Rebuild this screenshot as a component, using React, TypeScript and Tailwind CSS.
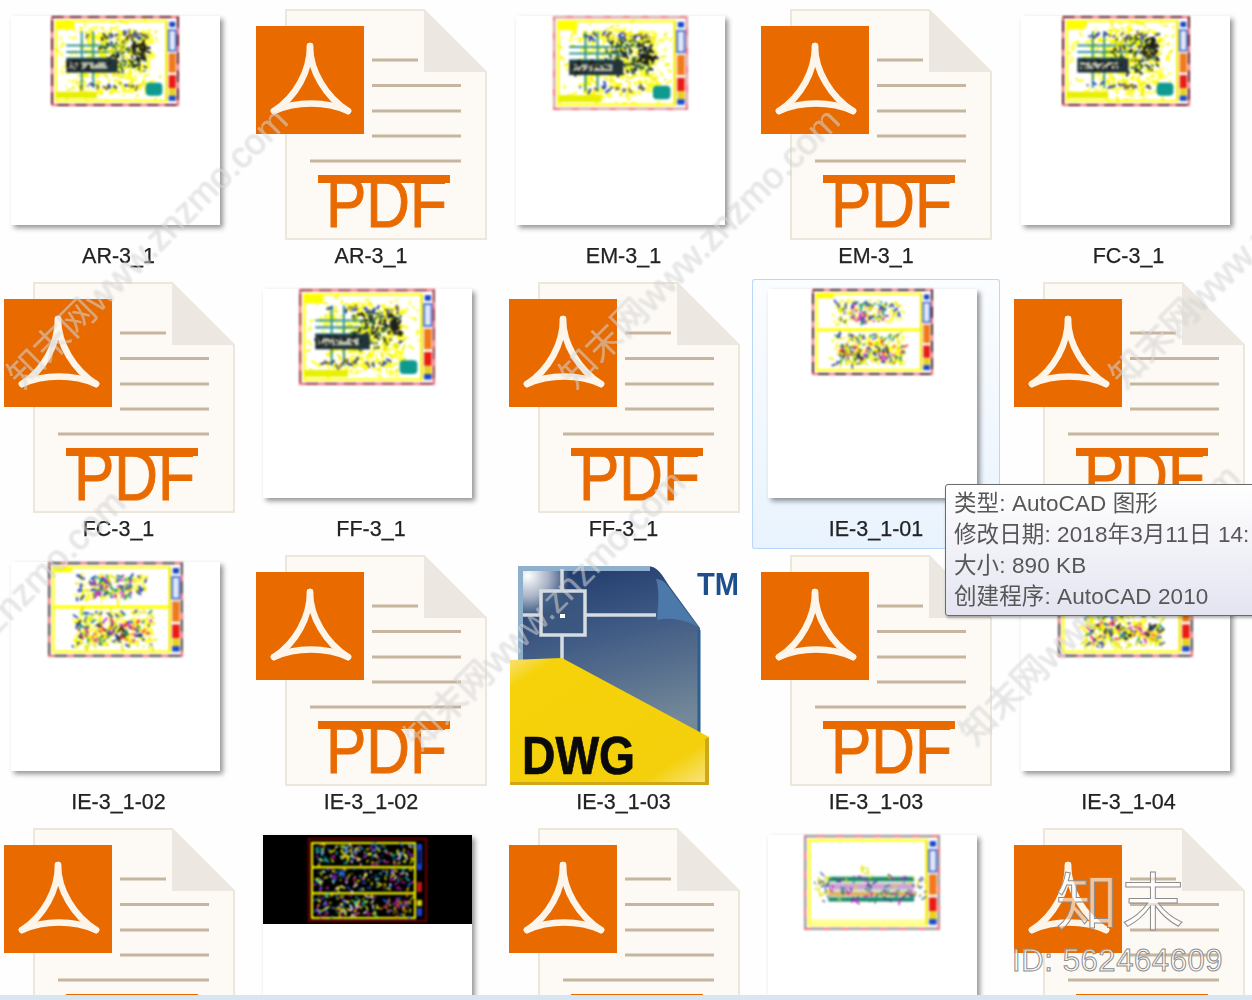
import React from "react";

const SANS = "font-['Liberation_Sans','Noto_Sans_CJK_SC',sans-serif]";

function rng(seed: number) {
  let a = seed;
  return () => {
    a |= 0;
    a = (a + 0x6d2b79f5) | 0;
    let t = Math.imul(a ^ (a >>> 15), 1 | a);
    t = (t + Math.imul(t ^ (t >>> 7), 61 | t)) ^ t;
    return ((t ^ (t >>> 14)) >>> 0) / 4294967296;
  };
}

type Region = [number, number, number, number, number, string[], number?];

function Noise({ regions, seed }: { regions: Region[]; seed: number }) {
  const r = rng(seed);
  const items: React.ReactNode[] = [];
  regions.forEach((g, i) => {
    const [x, y, w, h, n, colors, sw] = g;
    for (let k = 0; k < n; k++) {
      const px = x + r() * w;
      const py = y + r() * h;
      const a = r() * Math.PI * 2;
      const l = 1 + r() * 4;
      items.push(
        <line
          key={`${i}-${k}`}
          x1={px}
          y1={py}
          x2={px + Math.cos(a) * l}
          y2={py + Math.sin(a) * l}
          stroke={colors[Math.floor(r() * colors.length)]}
          strokeWidth={sw ?? 1}
        />
      );
    }
  });
  return <g>{items}</g>;
}

function TitleStrip() {
  return (
    <g>
      <rect x="91" y="3" width="7.5" height="64" fill="#ffffff" />
      <rect x="92.5" y="4.5" width="4.5" height="4" fill="#1545c4" />
      <rect x="92" y="11" width="5.5" height="16" fill="#dfe6f5" stroke="#2f5fd0" strokeWidth="1.2" />
      <rect x="92" y="29" width="5.5" height="15" fill="#f07a1a" />
      <rect x="92" y="46" width="5.5" height="10" fill="#ea1a14" />
      <rect x="92" y="56" width="5.5" height="6" fill="#e8d020" />
      <rect x="92" y="62" width="5.5" height="4" fill="#1a4ac8" />
      <line x1="90.4" y1="4" x2="90.4" y2="66" stroke="#e6d400" strokeWidth="1" />
    </g>
  );
}

function Cad({
  width,
  height,
  kind,
  seed,
  dash = "#6a1c2c",
}: {
  width: number;
  height: number;
  kind: "plan" | "double" | "elev";
  seed: number;
  dash?: string;
}) {
  const yel = ["#ffff00", "#ffff00", "#f4f000"];
  let body: React.ReactNode = null;
  if (kind === "plan") {
    body = (
      <g>
        <Noise
          seed={seed}
          regions={[
            [6, 5, 82, 60, 130, yel, 1.3],
            [22, 10, 56, 50, 280, yel, 1.5],
          ]}
        />
        <g stroke="#1f8a8a" strokeWidth="1.5" opacity="0.9">
          <line x1="12" y1="23" x2="55" y2="23" />
          <line x1="12" y1="28" x2="55" y2="28" />
          <line x1="12" y1="33" x2="45" y2="33" />
          <line x1="24" y1="12" x2="24" y2="56" />
          <line x1="33" y1="12" x2="33" y2="56" />
        </g>
        <Noise
          seed={seed + 3}
          regions={[
            [40, 17, 34, 26, 150, ["#1c2d20", "#2a6040", "#e2e200", "#e2e200", "#101010", "#2a6040"], 1.4],
            [64, 20, 10, 14, 26, ["#151515", "#202020"], 1.8],
            [20, 14, 56, 1.5, 20, ["#1d38b0", "#7a6a30"], 1.5],
            [18, 53, 52, 1.5, 18, ["#1d38b0", "#7a6a30"], 1.5],
          ]}
        />
        <rect x="12" y="33" width="40" height="11" fill="#22343a" />
        <rect x="14" y="36" width="30" height="5" fill="#b8bfae" />
        <Noise seed={seed + 1} regions={[[14, 36, 30, 5, 26, ["#151515"], 1.1]]} />
        <rect x="74" y="52" width="13" height="10" rx="3" fill="#0f9a90" />
        <rect x="4" y="4.5" width="14" height="6" fill="#ffff00" />
        <rect x="4" y="59" width="32" height="5" fill="#e8f000" />
      </g>
    );
  } else if (kind === "double") {
    body = (
      <g>
        <rect x="4" y="32" width="86" height="2.4" fill="#ffff00" />
        <rect x="4" y="4.5" width="14" height="3" fill="#ffff00" />
        <Noise
          seed={seed}
          regions={[
            [18, 10, 56, 18, 70, yel, 1.2],
            [18, 38, 60, 24, 120, yel, 1.3],
            [32, 11, 30, 15, 90, ["#0f8a70", "#1d38b0", "#e2e200", "#0f8a70", "#d018c8"], 1.4],
            [20, 10, 8, 16, 12, ["#1d38b0", "#1d38b0", "#e2e200"], 1.4],
            [64, 10, 10, 16, 12, ["#1d38b0", "#e2e200"], 1.4],
            [22, 44, 54, 13, 170, ["#e2e200", "#ffff00", "#d018c8", "#1d38b0", "#0f8a70", "#ff3030", "#ffff00", "#202020"], 1.4],
            [18, 37, 60, 3, 36, ["#1d38b0", "#0f8a70", "#e2e200"], 1.2],
            [18, 58, 60, 4, 36, ["#e2e200", "#1d38b0", "#e2e200"], 1.2],
          ]}
        />
      </g>
    );
  } else {
    body = (
      <g>
        <rect x="18" y="30" width="63" height="19" fill="#d0e8d0" />
        <rect x="18" y="31" width="63" height="3" fill="#1f8a70" />
        <rect x="18" y="36" width="63" height="4" fill="#d1a0d8" />
        <rect x="18" y="42" width="63" height="3" fill="#e0b060" />
        <rect x="18" y="46" width="63" height="3" fill="#1f8a70" />
        <Noise
          seed={seed}
          regions={[
            [18, 30, 63, 19, 70, ["#e2e200", "#d018c8", "#1d8a70", "#404090"], 1.1],
            [7, 30, 11, 20, 22, ["#e2e200", "#4050a0"], 1],
            [81, 30, 8, 20, 16, ["#e2e200", "#4050a0"], 1],
            [40, 22, 8, 8, 6, ["#e2e200"], 1],
          ]}
        />
        <rect x="5" y="62" width="84" height="4" fill="#ffffa0" />
      </g>
    );
  }
  return (
    <svg
      width={width}
      height={height}
      viewBox="0 0 100 70"
      preserveAspectRatio="none"
      className="block blur-[0.9px]"
    >
      <rect x="0" y="0" width="100" height="70" fill="#ffffff" />
      <rect x="4" y="4" width="86" height="62" fill="none" stroke="#ffff00" strokeWidth="1.6" />
      {body}
      <TitleStrip />
      <rect x="0.8" y="0.8" width="98.4" height="68.4" fill="none" stroke="#f0707a" strokeWidth="1.7" />
      <rect
        x="0.8"
        y="0.8"
        width="98.4"
        height="68.4"
        fill="none"
        stroke={dash}
        strokeWidth="1.7"
        strokeDasharray="9 5"
      />
    </svg>
  );
}

function BlackCad() {
  const cols = ["#ffff00", "#ffff00", "#e018d0", "#20d0d0", "#ffffff", "#2060ff"];
  return (
    <svg width={119} height={84} viewBox="0 0 119 84" className="block blur-[0.8px]">
      <rect x="0.7" y="0.7" width="117.6" height="82.6" fill="none" stroke="#8a0000" strokeWidth="1.8" />
      <rect x="4" y="5" width="103" height="75" fill="none" stroke="#ffff00" strokeWidth="2" />
      <rect x="4" y="28" width="103" height="2.5" fill="#e8e800" />
      <rect x="4" y="54" width="103" height="2.5" fill="#e8e800" />
      <Noise
        seed={77}
        regions={[
          [7, 7, 22, 19, 40, cols, 1.4],
          [32, 7, 22, 19, 40, cols, 1.4],
          [57, 7, 22, 19, 40, cols, 1.4],
          [82, 7, 22, 19, 40, cols, 1.4],
          [7, 32, 96, 20, 130, cols, 1.4],
          [7, 58, 30, 20, 55, cols, 1.4],
          [40, 58, 30, 20, 60, ["#ffffff", "#ffff00", "#20d0d0", "#e018d0"], 1.4],
          [74, 58, 30, 20, 55, ["#ffff00", "#ff8020", "#2060ff", "#e018d0"], 1.4],
        ]}
      />
      <rect x="109" y="6" width="5" height="26" fill="#1a3fd0" />
      <rect x="110.5" y="12" width="2" height="14" fill="#000000" />
      <rect x="109" y="44" width="5" height="10" fill="#c01818" />
      <rect x="109" y="62" width="5" height="6" fill="#e0d020" />
      <rect x="109" y="70" width="5" height="8" fill="#1a3fd0" />
    </svg>
  );
}

function Thumb({ children, black }: { children: React.ReactNode; black?: boolean }) {
  return (
    <div className="ml-[16px] mt-[10px] h-[209px] w-[209px] bg-white shadow-[3px_3px_5px_rgba(0,0,0,0.42)]">
      <div className={black ? "flex h-[89px] justify-center bg-black pt-[3px]" : ""}>{children}</div>
    </div>
  );
}

function PdfIcon() {
  return (
    <svg width={232} height={232} viewBox="0 0 232 232" className="ml-[9px] mt-[3px] block">
      <path d="M30 1H168L230 63V230H30Z" fill="#fdfaf5" stroke="#ece6db" strokeWidth="2" />
      <path d="M168 1L230 63H168Z" fill="#ece8e1" />
      <g stroke="#c6b6a0" strokeWidth="3">
        <line x1="116" y1="51" x2="162" y2="51" />
        <line x1="116" y1="76.5" x2="205" y2="76.5" />
        <line x1="116" y1="102" x2="205" y2="102" />
        <line x1="116" y1="127" x2="205" y2="127" />
        <line x1="54" y1="152" x2="205" y2="152" />
      </g>
      <rect x="0" y="17" width="108" height="108" fill="#e96b00" />
      <g fill="none" stroke="#fdf5ea" strokeWidth="6.5" strokeLinecap="round">
        <path d="M54 37C54 62 40 88 18 102" />
        <path d="M54 37C54 62 70 88 92 102" />
        <path d="M18 102C40 92 70 92 92 102" />
      </g>
      <rect x="62" y="166" width="132" height="8" fill="#e96b00" />
      <text
        x="70"
        y="218"
        fontSize="70"
        fill="#e96b00"
        stroke="#e96b00"
        strokeWidth="1"
        textLength={121}
        lengthAdjust="spacingAndGlyphs"
        fontFamily="'Liberation Sans', sans-serif"
      >
        PDF
      </text>
    </svg>
  );
}

function DwgIcon() {
  return (
    <svg width={234} height={232} viewBox="0 0 234 232" className="ml-[10.5px] mt-[5px] block">
      <defs>
        <linearGradient id="dwgBlue" x1="0" y1="0" x2="0.25" y2="1">
          <stop offset="0" stopColor="#1c3669" />
          <stop offset="0.45" stopColor="#3f5a84" />
          <stop offset="1" stopColor="#738899" />
        </linearGradient>
        <radialGradient id="dwgGlow" cx="0.08" cy="0.08" r="0.7">
          <stop offset="0" stopColor="#ffffff" />
          <stop offset="0.5" stopColor="#ffffff" stopOpacity="0.6" />
          <stop offset="1" stopColor="#ffffff" stopOpacity="0" />
        </radialGradient>
        <linearGradient id="dwgYellow" x1="0" y1="0" x2="1" y2="1">
          <stop offset="0" stopColor="#f8e27a" />
          <stop offset="0.12" stopColor="#f6d20a" />
          <stop offset="0.82" stopColor="#f4d00c" />
          <stop offset="1" stopColor="#f8e68a" />
        </linearGradient>
      </defs>
      <path d="M8 9H137C148 9 152 18 160 30L190 71V190H8Z" fill="url(#dwgBlue)" />
      <path d="M8 11.5H140" stroke="#8fb0cc" strokeWidth="5" />
      <path d="M10.5 9V110" stroke="#8fb0cc" strokeWidth="5" />
      <path d="M189 73V182" stroke="#2c5f90" strokeWidth="3" />
      <rect x="13" y="14" width="60" height="60" fill="url(#dwgGlow)" />
      <path d="M146 22C150 34 148 50 147 63C160 60 176 63 188 70L160 32C156 26 152 22 146 22Z" fill="#4a79aa" />
      <g stroke="#d6dde2" strokeWidth="3.5" fill="none">
        <line x1="52" y1="12" x2="52" y2="34" />
        <line x1="52" y1="78" x2="52" y2="102" />
        <line x1="13" y1="58" x2="31" y2="58" />
        <line x1="75" y1="58" x2="146" y2="58" />
        <rect x="31" y="34" width="44" height="44" fill="#3c5880" fillOpacity="0.85" />
      </g>
      <rect x="50" y="57" width="5" height="4" fill="#ffffff" />
      <path d="M0 103L52 101L199 180V228H0Z" fill="url(#dwgYellow)" />
      <path d="M0 225H199V228H0Z" fill="#cfa818" />
      <path d="M195 182L199 180V228L195 225Z" fill="#cfa818" />
      <text
        x="12"
        y="217"
        fontSize="54"
        fontWeight="700"
        fill="#0a0a0a"
        stroke="#0a0a0a"
        strokeWidth="0.7"
        textLength={113}
        lengthAdjust="spacingAndGlyphs"
        fontFamily="'Liberation Sans', sans-serif"
      >
        DWG
      </text>
      <text
        x="187"
        y="38"
        fontSize="31"
        fontWeight="700"
        fill="#1c4f8c"
        textLength={42}
        lengthAdjust="spacingAndGlyphs"
        fontFamily="'Liberation Sans', sans-serif"
      >
        TM
      </text>
    </svg>
  );
}

function Cell({
  label,
  selected,
  children,
}: {
  label: string;
  selected?: boolean;
  children: React.ReactNode;
}) {
  return (
    <div
      className={`flex h-[270px] w-[248px] flex-col rounded-[3px] ${
        selected ? "bg-gradient-to-b from-[#fbfdff] to-[#e9f3fd] shadow-[inset_0_0_0_1px_#b9d7fa]" : ""
      }`}
    >
      <div className="h-[236px]">{children}</div>
      <div
        className={`flex h-[28px] items-center justify-center text-[21.5px] text-[#222222] [-webkit-text-stroke:0.25px_#222222] ${SANS}`}
      >
        {label}
      </div>
    </div>
  );
}

function Mark({ x, y, text }: { x: number; y: number; text: string }) {
  return (
    <div
      className={`absolute -translate-x-1/2 -translate-y-1/2 -rotate-45 whitespace-nowrap text-[36px] leading-none text-white/40 [text-shadow:0_0_2px_rgba(120,120,120,0.32)] ${SANS}`}
      style={{ left: x, top: y }}
    >
      {text}
    </div>
  );
}

const WM = "知末网www.znzmo.com";

export default function App() {
  return (
    <div className="relative flex h-[1000px] w-[1252px] flex-col overflow-hidden bg-[#fefefe]">
      <div className="min-h-0 flex-1 overflow-hidden blur-[0.4px]">
        <div className="-ml-[5.5px] grid grid-cols-[repeat(5,248px)] auto-rows-[270px] gap-x-[4.5px] gap-y-[3px] pt-[6px]">
          <Cell label="AR-3_1"><Thumb><div className="ml-[40px]"><Cad width={128} height={90} kind="plan" seed={11} /></div></Thumb></Cell>
          <Cell label="AR-3_1"><PdfIcon /></Cell>
          <Cell label="EM-3_1"><Thumb><div className="ml-[37px]"><Cad width={135} height={94} kind="plan" seed={23} dash="#d9a9a9" /></div></Thumb></Cell>
          <Cell label="EM-3_1"><PdfIcon /></Cell>
          <Cell label="FC-3_1"><Thumb><div className="ml-[41px]"><Cad width={128} height={90} kind="plan" seed={37} /></div></Thumb></Cell>

          <Cell label="FC-3_1"><PdfIcon /></Cell>
          <Cell label="FF-3_1"><Thumb><div className="ml-[36px]"><Cad width={136} height={96} kind="plan" seed={41} dash="#a04650" /></div></Thumb></Cell>
          <Cell label="FF-3_1"><PdfIcon /></Cell>
          <Cell label="IE-3_1-01" selected><Thumb><div className="ml-[44px]"><Cad width={121} height={86} kind="double" seed={53} dash="#4a2028" /></div></Thumb></Cell>
          <Cell label=""><PdfIcon /></Cell>

          <Cell label="IE-3_1-02"><Thumb><div className="ml-[37px]"><Cad width={135} height={95} kind="double" seed={61} dash="#555555" /></div></Thumb></Cell>
          <Cell label="IE-3_1-02"><PdfIcon /></Cell>
          <Cell label="IE-3_1-03"><DwgIcon /></Cell>
          <Cell label="IE-3_1-03"><PdfIcon /></Cell>
          <Cell label="IE-3_1-04"><Thumb><div className="ml-[37px]"><Cad width={135} height={95} kind="double" seed={67} dash="#555555" /></div></Thumb></Cell>

          <Cell label=""><PdfIcon /></Cell>
          <Cell label=""><Thumb black><BlackCad /></Thumb></Cell>
          <Cell label=""><PdfIcon /></Cell>
          <Cell label=""><Thumb><div className="ml-[36px]"><Cad width={136} height={95} kind="elev" seed={71} dash="#999999" /></div></Thumb></Cell>
          <Cell label=""><PdfIcon /></Cell>
        </div>
      </div>
      <div className="h-[5px] shrink-0 bg-[#d8e5f2]" />

      <Mark x={148} y={248} text={WM} />
      <Mark x={700} y={248} text={WM} />
      <Mark x={1250} y={248} text={WM} />
      <Mark x={-15} y={630} text={WM} />
      <Mark x={545} y={610} text={WM} />
      <Mark x={1100} y={605} text={WM} />

      <div
        className={`absolute left-[945px] top-[484px] h-[132px] w-[340px] rounded-[3px] border border-[#6b6b6b] bg-gradient-to-b from-[#ffffff] to-[#e3e4f0] pl-[8px] pt-[3px] text-[22.5px] leading-[31px] tracking-[0.1px] text-[#575757] shadow-[1px_2px_3px_rgba(0,0,0,0.3)] blur-[0.4px] ${SANS}`}
      >
        <div className="whitespace-pre">类型: AutoCAD 图形</div>
        <div className="whitespace-pre">修改日期: 2018年3月11日 14:</div>
        <div className="whitespace-pre">大小: 890 KB</div>
        <div className="whitespace-pre">创建程序: AutoCAD 2010</div>
      </div>

      <div className="absolute left-[1056px] top-[860px] font-['Noto_Sans_CJK_SC',sans-serif] text-[62px] font-normal leading-[76px] tracking-[4px] text-white/60 [-webkit-text-stroke:1px_#8c8c8c]">
        知末
      </div>
      <div className={`absolute left-[1012px] top-[942px] text-[31px] leading-[38px] tracking-[0.6px] text-white/70 [-webkit-text-stroke:1px_#8c8c8c] ${SANS}`}>
        ID: 562464609
      </div>
    </div>
  );
}
